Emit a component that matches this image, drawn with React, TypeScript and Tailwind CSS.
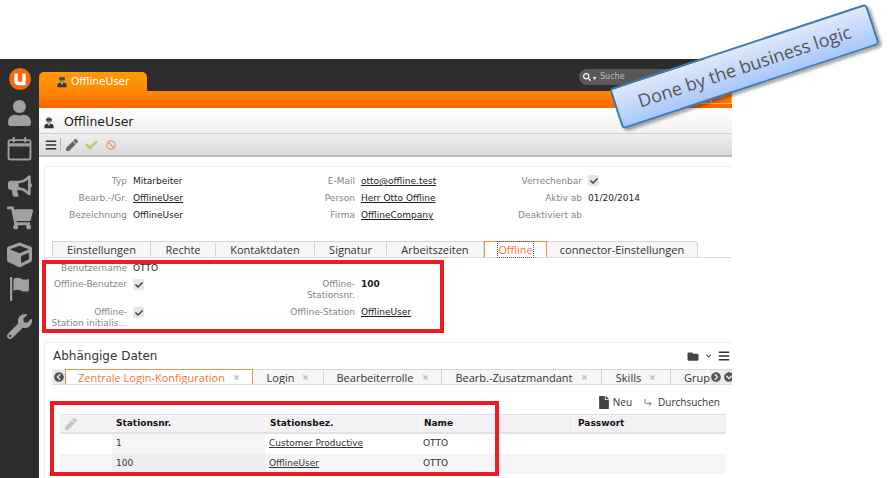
import React from 'react';
import { FaBan, FaBars, FaBullhorn, FaCheck, FaChevronCircleDown, FaChevronCircleLeft, FaChevronCircleRight, FaChevronDown, FaCube, FaFile, FaFolder, FaPen, FaSearch, FaShoppingCart, FaTimes, FaUser, FaWrench } from 'react-icons/fa';
import { LuCornerDownRight } from 'react-icons/lu';

const font = 'font-["DejaVu_Sans",sans-serif]';

const PersonIcon = ({ className }: { className?: string }) => (
  <svg viewBox="0 0 12 14" className={className}>
    <circle cx="6" cy="4" r="3.4" fill="#777" />
    <rect x="2.6" y="2.6" width="6.8" height="2" fill="#333" />
    <path d="M0.5 14 V11 Q0.5 8.6 3.5 8.4 H8.5 Q11.500 8.600 11.500 11 V14 Z" fill="#333" />
    <path d="M5 8.4 H7 L6.500 11 H5.500 Z" fill="#ddd" />
  </svg>
);

const Logo = () => (
  <svg viewBox="0 0 24 24" className="h-[24px] w-[24px]">
    <circle cx="12" cy="12" r="11.500" fill="#f26a0f" stroke="#222" />
    <path d="M8 6.500 V13.500 Q8 16.500 11 16.500 H16 V6.500" fill="none" stroke="#fff" strokeWidth="3.400" />
  </svg>
);

const CalendarIcon = () => (
  <svg viewBox="0 0 24 24" className="h-[25px] w-[25px]" fill="none" stroke="#a0a0a0" strokeWidth="1.800">
    <rect x="1.500" y="4" width="21" height="18.500" rx="1.500" />
    <path d="M1.500 8.500 H22.500" strokeWidth="3" />
    <path d="M6.500 1 V6 M17.500 1 V6" strokeWidth="2" />
  </svg>
);

const FlagIcon = () => (
  <svg viewBox="0 0 24 28" className="h-[24px] w-[21px]" fill="#a0a0a0">
    <rect x="1" y="0" width="2.500" height="28" />
    <path d="M5 2 Q10 0 14 2 Q18 4 23 2 V16 Q18 18 14 16 Q10 14 5 16 Z" />
  </svg>
);

const Check = () => (
  <span className="flex h-[11px] w-[11px] items-center justify-center rounded-[2px] bg-[#e6e6e6]">
    <FaCheck className="h-[8px] w-[8px] text-[#444]" />
  </span>
);

const Label = ({ children }: { children: React.ReactNode }) => (
  <div className="whitespace-nowrap text-right text-[#858585]">{children}</div>
);

const Value = ({ children, link }: { children?: React.ReactNode; link?: boolean }) => (
  <div className={link ? 'whitespace-nowrap text-[#222] underline' : 'whitespace-nowrap text-[#222]'}>{children}</div>
);

const mainTabs = [
  { label: 'Einstellungen', w: 'w-[99px]' },
  { label: 'Rechte', w: 'w-[65px]' },
  { label: 'Kontaktdaten', w: 'w-[99px]' },
  { label: 'Signatur', w: 'w-[72px]' },
  { label: 'Arbeitszeiten', w: 'w-[97px]' },
];

const depTabs = [
  { label: 'Login', w: 'w-[71px]' },
  { label: 'Bearbeiterrolle', w: 'w-[118px]' },
  { label: 'Bearb.-Zusatzmandant', w: 'w-[160px]' },
  { label: 'Skills', w: 'w-[69px]' },
];

export default function App() {
  return (
    <div className={`relative h-[478px] w-[888px] overflow-hidden bg-white pt-[59px] text-[9px] ${font}`}>
      <div className="flex h-[419px] w-[732px]">
        {/* Sidebar */}
        <div className="flex w-[39px] shrink-0 flex-col items-center bg-[#2d2d2d] pt-[8px]">
          <Logo />
          <FaUser className="mt-[9px] h-[26px] w-[25px] text-[#a0a0a0]" />
          <div className="mt-[10px]"><CalendarIcon /></div>
          <FaBullhorn className="mt-[14px] h-[22px] w-[24px] text-[#a0a0a0]" />
          <FaShoppingCart className="mt-[8px] h-[26px] w-[26px] text-[#a0a0a0]" />
          <FaCube className="mt-[11px] h-[26px] w-[25px] text-[#a0a0a0]" />
          <div className="mt-[9px]"><FlagIcon /></div>
          <FaWrench className="mt-[13px] h-[25px] w-[25px] text-[#a0a0a0]" />
        </div>

        <div className="flex min-w-0 flex-1 flex-col">
          {/* Top bar */}
          <div className="flex h-[32px] shrink-0 items-end justify-between bg-[#2d2d2d]">
            <div className="flex h-[19px] w-[108px] items-center gap-[4px] rounded-t-[5px] bg-gradient-to-b from-[#ff9a0a] to-[#ff8a05] pl-[18px] text-[10.500px] text-white">
              <PersonIcon className="h-[13px] w-[10px]" />
              <span>OfflineUser</span>
            </div>
            <div className="mr-[40px] mb-[6px] flex h-[16px] w-[113px] items-center gap-[2px] rounded-full bg-[#585858] pl-[4px] text-[8px] text-[#bdbdbd]">
              <FaSearch className="h-[8px] w-[8px] text-white" />
              <span className="mr-[2px] text-[6px] text-white">▾</span>
              <span>Suche</span>
            </div>
          </div>

          <div className="flex h-[17px] shrink-0 justify-end bg-gradient-to-b from-[#ff8a05] to-[#ff6400] pt-[6px]">
            <div className="h-[7px] w-[20px] border-r border-b border-[#ffb070]" />
            <div className="h-[7px] w-[20px] border-r border-b border-[#ffb070]" />
          </div>

          {/* Title */}
          <div className="flex h-[26px] shrink-0 items-center gap-[10px] border-b border-[#cfcfcf] bg-gradient-to-b from-white to-[#f1f0f1] pt-[4px] pl-[5px] text-[12.500px] text-[#222]">
            <PersonIcon className="h-[13px] w-[10px]" />
            <span>OfflineUser</span>
          </div>

          {/* Toolbar */}
          <div className="flex h-[23px] shrink-0 items-center border-b-2 border-[#bdbdbd] bg-gradient-to-b from-[#efefef] to-[#d9d9d9] pl-[6px]">
            <FaBars className="h-[12px] w-[12px] text-[#333]" />
            <div className="mx-[3px] h-[13px] w-px bg-[#b5b5b5]" />
            <FaPen className="ml-[2px] h-[12px] w-[12px] text-[#666]" />
            <FaCheck className="ml-[7px] h-[12px] w-[13px] text-[#a9cf6e]" />
            <FaBan className="ml-[8px] h-[10px] w-[10px] text-[#e0a080]" />
          </div>

          {/* Main card */}
          <div className="ml-[5px] mt-[9px] rounded-t-[3px] border-t border-l border-[#f0eef0] bg-white">
            <div className="mt-[8px] grid grid-cols-[82px_110px_106px_110px_105px_1fr] gap-x-[6px] gap-y-[5px] text-[9px] leading-[12px]">
              <Label>Typ</Label><Value>Mitarbeiter</Value>
              <Label>E-Mail</Label><Value link>otto@offline.test</Value>
              <Label>Verrechenbar</Label><div className="flex items-start"><Check /></div>
              <Label>Bearb.-/Gr.</Label><Value link>OfflineUser</Value>
              <Label>Person</Label><Value link>Herr Otto Offline</Value>
              <Label>Aktiv ab</Label><Value>01/20/2014</Value>
              <Label>Bezeichnung</Label><Value>OfflineUser</Value>
              <Label>Firma</Label><Value link>OfflineCompany</Value>
              <Label>Deaktiviert ab</Label><Value />
            </div>

            <div className="mt-[20px] flex h-[17px] border-b border-[#dcdcdc] pl-[7px] font-['Open_Sans',sans-serif] text-[11px] leading-[16px] text-[#333]">
              {mainTabs.map(t => (
                <div key={t.label} className={`${t.w} border-t border-r border-[#d5d5d5] bg-[#f7f6f7] text-center first:border-l`}>{t.label}</div>
              ))}
              <div className="w-[63px] border-x border-t border-[#f98b55] bg-white text-center text-[#f9743a]">
                <span className="outline-1 outline-dotted outline-[#555]">Offline</span>
              </div>
              <div className="w-[151px] rounded-tr-[4px] border-t border-r border-[#d5d5d5] bg-[#f7f6f7] text-center">connector-Einstellungen</div>
            </div>

            <div className="mt-[5px] grid grid-cols-[82px_110px_106px_110px_105px_1fr] gap-x-[6px] leading-[11px]">
              <Label>Benutzername</Label><Value>OTTO</Value>
              <div className="col-span-4 h-[16px]" />
              <Label>Offline-Benutzer</Label><div><Check /></div>
              <Label>Offline-<br />Stationsnr.</Label><Value><b>100</b></Value>
              <div className="col-span-2 h-[28px]" />
              <Label>Offline-<br />Station initialis...</Label><div><Check /></div>
              <Label>Offline-Station</Label><Value link>OfflineUser</Value>
              <div className="col-span-2 h-[28px]" />
            </div>
          </div>

          {/* Dependent data */}
          <div className="ml-[5px] mt-[7px] min-h-0 flex-1 overflow-hidden rounded-t-[3px] border-t border-l border-[#f0eef0] bg-white">
            <div className="flex h-[26px] items-center justify-between pl-[8px] pr-[2px] text-[12px] text-[#333]">
              <span>Abhängige Daten</span>
              <div className="flex items-center gap-[6px]">
                <FaFolder className="h-[11px] w-[12px] text-[#444]" />
                <FaChevronDown className="h-[6px] w-[7px] text-[#444]" />
                <FaBars className="h-[12px] w-[12px] text-[#333]" />
              </div>
            </div>
            <div className="ml-[7px] flex h-[16px] w-[681px] overflow-hidden border-b border-[#dcdcdc] font-['Open_Sans',sans-serif] text-[11px] leading-[15px] text-[#333]">
              <div className="flex w-[13px] shrink-0 items-center justify-center bg-[#eaeaea]">
                <FaChevronCircleLeft className="h-[10px] w-[10px] text-[#555]" />
              </div>
              <div className="flex w-[188px] shrink-0 items-center justify-center gap-[8px] border-x border-t border-[#f98b55] bg-white text-[#f9743a]">
                <span>Zentrale Login-Konfiguration</span>
                <FaTimes className="h-[7px] w-[7px] text-[#bbb]" />
              </div>
              {depTabs.map(t => (
                <div key={t.label} className={`flex ${t.w} shrink-0 items-center justify-center gap-[8px] border-t border-r border-[#d5d5d5] bg-[#f7f6f7]`}>
                  <span>{t.label}</span>
                  <FaTimes className="h-[7px] w-[7px] text-[#bbb]" />
                </div>
              ))}
              <div className="flex flex-1 items-center justify-between border-t border-[#d5d5d5] bg-[#f7f6f7] pl-[13px]">
                <span>Grup</span>
                <div className="flex h-full items-center gap-[3px] bg-[#eaeaea] px-[1px]">
                  <FaChevronCircleRight className="h-[10px] w-[10px] text-[#555]" />
                  <FaChevronCircleDown className="h-[10px] w-[10px] text-[#555]" />
                </div>
              </div>
            </div>

            <div className="mr-[6px] mt-[9px] mb-[3px] flex h-[17px] items-center justify-end gap-[11px] pr-[6px] font-['Open_Sans',sans-serif] text-[10px] text-[#333]">
              <span className="flex items-center gap-[4px]"><FaFile className="h-[13px] w-[10px] text-[#444]" />Neu</span>
              <span className="flex items-center gap-[5px]"><LuCornerDownRight className="h-[9px] w-[10px] text-[#555]" />Durchsuchen</span>
            </div>

            <div className="ml-[15px] mr-[6px] text-[9px] text-[#333]">
              <div className="grid h-[20px] grid-cols-[52px_153px_154px_154px_1fr] items-center border-t border-b-2 border-[#e3e1e3] bg-[#f3f1f3] font-bold text-[#111]">
                <div className="pl-[5px]"><FaPen className="h-[12px] w-[12px] text-[#c4c4c4]" /></div>
                <div className="pl-[4px]">Stationsnr.</div>
                <div className="border-l border-white pl-[4px]">Stationsbez.</div>
                <div className="border-l border-white pl-[4px]">Name</div>
                <div className="border-l border-white pl-[4px]">Passwort</div>
              </div>
              <div className="grid h-[20px] grid-cols-[52px_153px_154px_154px_1fr] items-center">
                <div />
                <div className="flex h-full items-center bg-[#f6f4f6] pl-[4px]">1</div>
                <div className="pl-[4px] underline">Customer Productive</div>
                <div className="pl-[4px]">OTTO</div>
                <div />
              </div>
              <div className="grid h-[20px] grid-cols-[52px_153px_154px_154px_1fr] items-center bg-[#f6f4f6]">
                <div />
                <div className="flex h-full items-center bg-[#efedef] pl-[4px]">100</div>
                <div className="pl-[4px] underline">OfflineUser</div>
                <div className="pl-[4px]">OTTO</div>
                <div />
              </div>
            </div>
          </div>
        </div>
      </div>

      {/* Annotations drawn over the screen */}
      <div className="absolute top-[260px] left-[42px] h-[73px] w-[402px] border-4 border-[#ed1c24]" />
      <div className="absolute top-[401px] left-[50px] h-[75px] w-[449px] border-4 border-[#ed1c24]" />
      <div className="absolute top-[45px] left-[609px] flex h-[43px] w-[271px] -rotate-[18.3deg] items-center justify-center rounded-[4px] border-2 border-[#3d78b8] bg-gradient-to-b from-[#dfe9fb] to-[#a8c8f8] font-['Open_Sans',sans-serif] text-[18px] text-[#555] shadow-[2px_3px_3px_rgba(0,0,0,0.35)]">
        Done by the business logic
      </div>
    </div>
  );
}
